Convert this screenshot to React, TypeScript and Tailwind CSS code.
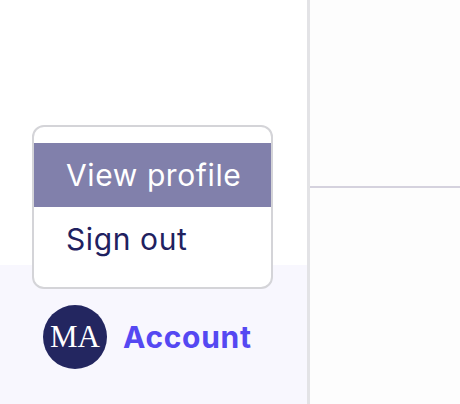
export default function App() {
  return (
    <div className="flex h-[404px] w-[460px] bg-white" style={{ fontFamily: "Inter, 'Noto Sans', sans-serif" }}>
      <div className="relative flex w-[310px] flex-col border-r-[3px] border-[#e3e3e6]">
        <div className="h-[265px] bg-white" />
        <div className="flex flex-1 flex-col bg-[#f8f7fe] px-[43px] pt-[40px]">
          <div className="flex items-center gap-4">
            <div
              className="flex h-16 w-16 items-center justify-center rounded-full bg-[#232660] text-[31px] text-white"
              style={{ fontFamily: "'Liberation Serif', 'DejaVu Serif', serif" }}
            >
              MA
            </div>
            <span className="whitespace-nowrap text-[30px] font-bold tracking-[0.7px] text-[#5548f2]">Account</span>
          </div>
        </div>
        <div className="absolute left-[32px] top-[125px] w-[241px] rounded-xl border-2 border-[#d4d4d8] bg-white py-4">
          <div className="flex h-16 items-center whitespace-nowrap bg-[#8180ab] pl-8 text-[30px] tracking-[0.6px] text-white">View profile</div>
          <div className="flex h-16 items-center whitespace-nowrap pl-8 text-[30px] tracking-[0.6px] text-[#1f2160]">Sign out</div>
        </div>
      </div>
      <div className="flex flex-1 flex-col bg-[#fdfdfd]">
        <div className="h-[186px]" />
        <div className="h-[2px] bg-[#d5d2de]" />
        <div className="flex-1" />
      </div>
    </div>
  );
}
